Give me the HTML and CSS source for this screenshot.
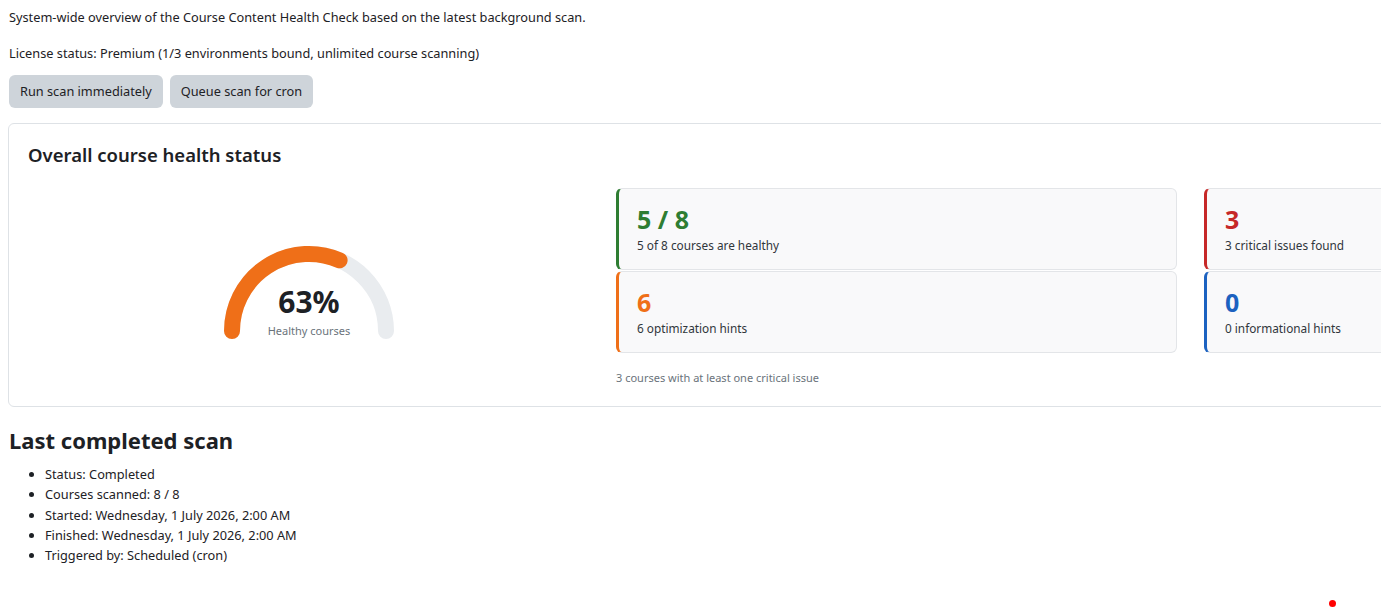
FILE: index.html
```html
<!DOCTYPE html>
<html>
    <head>
        <title>Course Content Health Check</title>
        <link rel="stylesheet" href="styles.css">
    </head>
    <body>
        <div class="page">
            <p class="intro">System-wide overview of the Course Content Health Check based on the latest background scan.</p>
            <p class="license">License status: Premium (1/3 environments bound, unlimited course scanning)</p>
            <div class="actions">
                <button class="btn">Run scan immediately</button>
                <button class="btn">Queue scan for cron</button>
            </div>

            <div class="overview">
                <h3 class="overview-title">Overall course health status</h3>
                <div class="overview-body">
                    <div class="gauge-col">
                        <div class="gauge">
                            <svg width="190" height="100" viewBox="0 0 190 100">
                                <path d="M18 87 A77 77 0 0 1 172 87" fill="none" stroke="#e9ecef" stroke-width="16" stroke-linecap="round"/>
                                <path d="M18 87 A77 77 0 0 1 125.6 16.3" fill="none" stroke="#ef6f18" stroke-width="16" stroke-linecap="round"/>
                            </svg>
                            <div class="gauge-value">63%</div>
                            <div class="gauge-label">Healthy courses</div>
                        </div>
                    </div>
                    <div class="stats">
                        <div class="stat-grid">
                            <div class="stat stat-healthy">
                                <div class="stat-number">5 / 8</div>
                                <div class="stat-text">5 of 8 courses are healthy</div>
                            </div>
                            <div class="stat stat-critical">
                                <div class="stat-number">3</div>
                                <div class="stat-text">3 critical issues found</div>
                            </div>
                            <div class="stat stat-hint">
                                <div class="stat-number">6</div>
                                <div class="stat-text">6 optimization hints</div>
                            </div>
                            <div class="stat stat-info">
                                <div class="stat-number">0</div>
                                <div class="stat-text">0 informational hints</div>
                            </div>
                        </div>
                        <div class="stat-note">3 courses with at least one critical issue</div>
                    </div>
                </div>
            </div>

            <h2 class="scan-title">Last completed scan</h2>
            <ul class="scan-list">
                <li>Status: Completed</li>
                <li>Courses scanned: 8 / 8</li>
                <li>Started: Wednesday, 1 July 2026, 2:00 AM</li>
                <li>Finished: Wednesday, 1 July 2026, 2:00 AM</li>
                <li>Triggered by: Scheduled (cron)</li>
            </ul>
        </div>

        <span class="dot"></span>
    </body>
</html>
```

FILE: styles.css
```css
body {
    margin: 8px 0 0 8px;
    font-family: "Noto Sans", "Open Sans", sans-serif;
    font-size: 12.75px;
    color: #1d2125;
    background: #fff;
}
.page {
    overflow: hidden;
    padding-left: 1px;
}
.intro,
.license {
    margin: 0;
    line-height: 20px;
}
.intro {
    margin-top: -1px;
    margin-bottom: 16px;
}
.actions {
    display: flex;
    gap: 7px;
    margin-top: 12px;
    margin-bottom: 15px;
}
.btn {
    font-family: inherit;
    font-size: 12.75px;
    line-height: 19px;
    padding: 7px 11px;
    color: #1d2125;
    background-color: #ced4da;
    border: none;
    border-radius: 6px;
}

.overview {
    margin-left: -1px;
    border: 1px solid #dee2e6;
    border-radius: 6px;
    padding: 18px 18px 20px 18px;
    width: max-content;
}
.overview-title {
    margin: 0 0 20px 1px;
    font-size: 18.5px;
    line-height: 26px;
    font-weight: 600;
}
.overview-body {
    display: grid;
    grid-template-columns: 562px 1149px;
    column-gap: 27px;
}
.gauge-col {
    display: flex;
    justify-content: center;
    align-items: center;
    padding-top: 14px;
    padding-left: 2px;
}
.gauge {
    position: relative;
    width: 190px;
    height: 100px;
}
.gauge svg {
    display: block;
}
.gauge-value {
    position: absolute;
    left: 0;
    right: 0;
    top: 40px;
    text-align: center;
    font-size: 30px;
    line-height: 36px;
    font-weight: 700;
}
.gauge-label {
    position: absolute;
    left: 0;
    right: 0;
    top: 79px;
    text-align: center;
    font-size: 11px;
    line-height: 16px;
    color: #6a737b;
}

.stat-grid {
    display: grid;
    grid-template-columns: 1fr 1fr;
    column-gap: 27px;
    row-gap: 1px;
}
.stat {
    height: 82px;
    box-sizing: border-box;
    padding: 14px 18px;
    background-color: #f9f9fa;
    border: 1px solid #e3e5e8;
    border-left: 3px solid;
    border-radius: 6px;
}
.stat-number {
    font-size: 25px;
    line-height: 32px;
    font-weight: 700;
}
.stat-text {
    font-size: 11.8px;
    line-height: 21px;
    color: #30363b;
}
.stat-healthy { border-left-color: #2e7d32; }
.stat-healthy .stat-number { color: #2e7d32; }
.stat-critical { border-left-color: #c62828; }
.stat-critical .stat-number { color: #c62828; }
.stat-hint { border-left-color: #ef6f18; }
.stat-hint .stat-number { color: #ef6f18; }
.stat-info { border-left-color: #1c62c0; }
.stat-info .stat-number { color: #1c62c0; }
.stat-note {
    margin-top: 17px;
    font-size: 11px;
    line-height: 16px;
    color: #6a737b;
}

.scan-title {
    margin: 19px 0 9px 0;
    font-size: 22px;
    line-height: 29px;
    font-weight: 700;
}
.scan-list {
    margin: 0;
    padding-left: 36px;
}
.scan-list li {
    line-height: 20.25px;
}

.dot {
    position: absolute;
    left: 1329px;
    top: 600px;
    width: 7px;
    height: 7px;
    border-radius: 50%;
    background: #f00;
}
```
